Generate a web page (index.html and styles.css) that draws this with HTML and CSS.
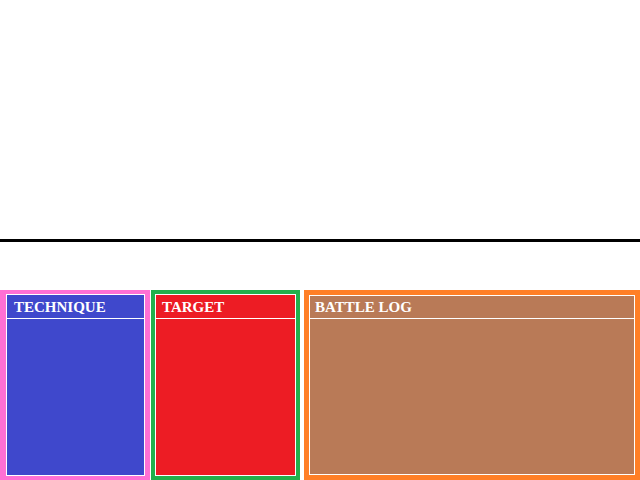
FILE: index.html
```
<!DOCTYPE html>
<html lang="en">
<head>
<meta charset="utf-8">
<meta name="viewport" content="width=device-width, initial-scale=1">
<title>Battle</title>
<link rel="stylesheet" href="styles.css">
</head>
<body>
<main class="screen">
  <div class="arena"></div>
  <div class="stage"></div>
  <div class="panels">
    <section class="panel technique" aria-labelledby="technique-title">
      <div class="frame"><h2 class="title" id="technique-title">TECHNIQUE</h2></div>
    </section>
    <section class="panel target" aria-labelledby="target-title">
      <div class="frame"><h2 class="title" id="target-title">TARGET</h2></div>
    </section>
    <section class="panel log" aria-labelledby="log-title">
      <div class="frame"><h2 class="title" id="log-title">BATTLE LOG</h2></div>
    </section>
  </div>
</main>
</body>
</html>
```
FILE: styles.css
```
* {
  box-sizing: border-box;
}

body {
  margin: 0;
  background: #fff;
  font-family: "Liberation Serif", "Times New Roman", serif;
}

.screen {
  display: flex;
  flex-direction: column;
  min-height: 100vh;
}

.arena {
  flex: 1;
  border-bottom: 3px solid #000;
}

.stage {
  height: 48px;
}

.panels {
  display: grid;
  grid-template-columns: 150fr 150fr 340fr;
  min-height: 190px;
}

.panel {
  display: flex;
}

.frame {
  flex: 1;
  border: 1px solid #fff;
}

.title {
  margin: 0;
  padding: 1px 6px 0;
  border-bottom: 1px solid #fff;
  color: #fff;
  font-size: 15px;
  font-weight: 700;
  line-height: 22px;
}

.technique {
  padding: 4px 5px 4px 6px;
  background: #ff70d4;
}

.technique .frame {
  background: #3f48cc;
}

.technique .title {
  padding-left: 7px;
}

.target {
  margin-left: 1px;
  padding: 4px;
  background: #22b14c;
}

.target .frame {
  background: #ed1c24;
}

.log {
  margin-left: 4px;
  padding: 5px;
  background: #ff7f27;
}

.log .frame {
  background: #b97a57;
}

.log .title {
  padding: 0 5px;
}
```
